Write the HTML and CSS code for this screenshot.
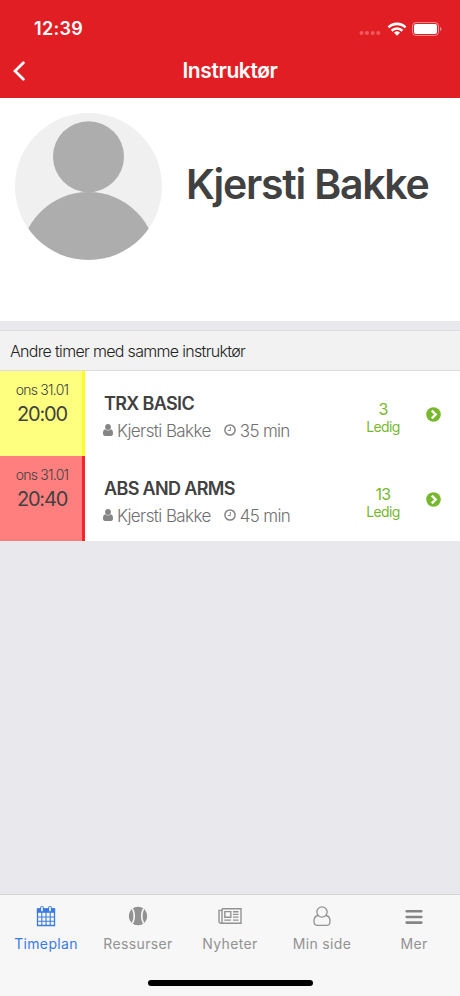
FILE: index.html
```html
<!DOCTYPE html>
<html lang="no">
  <head>
    <meta charset="UTF-8" />
    <meta name="viewport" content="width=device-width, initial-scale=1.0" />
    <title>Instruktør</title>
    <link rel="stylesheet" href="styles.css">
  </head>
  <body>
    <header class="header">
      <div class="status-bar">
        <span class="clock">12:39</span>
        <div class="status-icons">
          <svg class="signal" width="22" height="6" viewBox="0 0 22 6" fill="#ec5a60">
            <circle cx="2.5" cy="3" r="2" />
            <circle cx="8" cy="3" r="2" />
            <circle cx="13.7" cy="3" r="2" />
            <circle cx="19.3" cy="3" r="2" />
          </svg>
          <svg class="wifi" width="20" height="14" viewBox="0 0 20 14" fill="none" stroke="#fff" stroke-width="2.6">
            <path d="M1.4 5.4a12.3 12.3 0 0 1 17.2 0" />
            <path d="M4.6 8.7a7.7 7.7 0 0 1 10.8 0" />
            <path d="M10 13.8l-3-3a4.3 4.3 0 0 1 6 0z" fill="#fff" stroke="none" />
          </svg>
          <svg class="battery" width="30" height="14" viewBox="0 0 30 14">
            <rect x=".5" y=".5" width="26" height="13" rx="3.5" fill="none" stroke="#f08d91" />
            <rect x="2" y="2" width="23" height="10" rx="2" fill="#fff" />
            <path d="M28 4.8c2 .8 2 3.6 0 4.4z" fill="#f08d91" />
          </svg>
        </div>
      </div>
      <div class="nav-bar">
        <svg class="back" width="12" height="20" viewBox="0 0 12 20" fill="none" stroke="#fff" stroke-width="2.7" stroke-linecap="round">
          <path d="M10.400 1.700L2 10l8.400 8.300" />
        </svg>
        <h1 class="title">Instruktør</h1>
      </div>
    </header>

    <main class="content">
      <section class="profile">
        <svg class="avatar" width="148" height="148" viewBox="0 0 148 148">
          <clipPath id="avatar-clip"><circle cx="74.5" cy="73.5" r="73.5" /></clipPath>
          <g clip-path="url(#avatar-clip)">
            <rect width="148" height="148" fill="#f0f0f0" />
            <circle cx="74.5" cy="43.7" r="35.5" fill="#adadad" />
            <circle cx="74.5" cy="147" r="68" fill="#adadad" />
          </g>
        </svg>
        <h2 class="name">Kjersti Bakke</h2>
      </section>

      <h3 class="list-header">Andre timer med samme instruktør</h3>

      <div class="lesson yellow">
        <div class="when">
          <span class="date">ons 31.01</span>
          <span class="time">20:00</span>
        </div>
        <div class="info">
          <h4>TRX BASIC</h4>
          <p>
            <svg class="user" width="10" height="12" viewBox="0 0 10 12" fill="#858585">
              <circle cx="5" cy="3" r="2.9" />
              <path d="M2.300 5.300C.5 5.500 0 7.300 0 9.500 0 11 .7 12 2 12h6c1.300 0 2-1 2-2.500 0-2.200-.5-4-2.300-4.200a4 4 0 0 1-5.400 0z" />
            </svg>
            <span class="who">Kjersti Bakke</span>
            <svg class="clock-icon" width="12" height="12" viewBox="0 0 12 12" fill="none" stroke="#858585">
              <circle cx="6" cy="6" r="5.1" stroke-width="1.5" />
              <path d="M6.300 3v3.500H3.800" />
            </svg>
            <span class="length">35 min</span>
          </p>
        </div>
        <div class="free"><b>3</b><span>Ledig</span></div>
        <svg class="go" width="15" height="15" viewBox="0 0 15 15">
          <circle cx="7.5" cy="7.5" r="7.3" fill="#77b82e" />
          <path d="M5.800 3.600l3.900 3.900-3.900 3.900" fill="none" stroke="#fff" stroke-width="2.4" />
        </svg>
      </div>

      <div class="lesson red">
        <div class="when">
          <span class="date">ons 31.01</span>
          <span class="time">20:40</span>
        </div>
        <div class="info">
          <h4>ABS AND ARMS</h4>
          <p>
            <svg class="user" width="10" height="12" viewBox="0 0 10 12" fill="#858585">
              <circle cx="5" cy="3" r="2.9" />
              <path d="M2.300 5.300C.5 5.500 0 7.300 0 9.500 0 11 .7 12 2 12h6c1.300 0 2-1 2-2.500 0-2.200-.5-4-2.300-4.200a4 4 0 0 1-5.400 0z" />
            </svg>
            <span class="who">Kjersti Bakke</span>
            <svg class="clock-icon" width="12" height="12" viewBox="0 0 12 12" fill="none" stroke="#858585">
              <circle cx="6" cy="6" r="5.1" stroke-width="1.5" />
              <path d="M6.300 3v3.500H3.800" />
            </svg>
            <span class="length">45 min</span>
          </p>
        </div>
        <div class="free"><b>13</b><span>Ledig</span></div>
        <svg class="go" width="15" height="15" viewBox="0 0 15 15">
          <circle cx="7.5" cy="7.5" r="7.3" fill="#77b82e" />
          <path d="M5.800 3.600l3.900 3.900-3.900 3.900" fill="none" stroke="#fff" stroke-width="2.4" />
        </svg>
      </div>
    </main>

    <footer class="footer">
      <nav class="tabs">
        <a class="tab active">
          <svg width="24" height="22" viewBox="0 0 24 22">
            <path d="M3.500 4h17v16.500h-17z" fill="#f7f7f7" stroke="#3b7be4" stroke-width="1.3" />
            <path d="M2.900 3.500h18.200v4.300H2.900z" fill="#3b7be4" />
            <path d="M3.500 12h17M3.500 16.200h17M7.800 7v13.500M12 7v13.500M16.200 7v13.500" stroke="#3b7be4" stroke-width="1.1" />
            <path d="M8 2.800v2.600M16 2.800v2.600" stroke="#3b7be4" stroke-width="3.8" stroke-linecap="round" />
            <path d="M8 2.500v3M16 2.500v3" stroke="#f7f7f7" stroke-width="1.7" stroke-linecap="round" />
          </svg>
          <span>Timeplan</span>
        </a>
        <a class="tab">
          <svg width="24" height="22" viewBox="0 0 24 22">
            <clipPath id="ball"><circle cx="12" cy="11" r="9.4" /></clipPath>
            <g clip-path="url(#ball)">
              <circle cx="12" cy="11" r="9.4" fill="#929292" />
              <path d="M4.500 1c5 6 5 14 0 20M19.500 1c-5 6-5 14 0 20" fill="none" stroke="#f7f7f7" stroke-width="1.6" />
            </g>
          </svg>
          <span>Ressurser</span>
        </a>
        <a class="tab">
          <svg width="24" height="22" viewBox="0 0 24 22" fill="none" stroke="#929292" stroke-width="1.4">
            <path d="M4 3.700h19v14.500H3c-1.200 0-2-.7-2-1.700V5.400h3M4 3.700v13c0 1-.4 1.500-1 1.500" />
            <path d="M6.800 6.600h6v5.600h-6zM15 6.700h5.500M15 9.400h5.500M15 12.100h5.500M6.200 15.100h6.800M15 15.100h5.500" />
          </svg>
          <span>Nyheter</span>
        </a>
        <a class="tab">
          <svg width="24" height="22" viewBox="0 0 24 22" fill="none" stroke="#929292" stroke-width="1.3">
            <circle cx="12" cy="7" r="5.1" />
            <path d="M8.200 10.500C5.200 10.700 4 13 4 16.300 4 18.600 5 20.300 7 20.300h10c2 0 3-1.700 3-4 0-3.300-1.200-5.600-4.200-5.800" />
          </svg>
          <span>Min side</span>
        </a>
        <a class="tab">
          <svg width="24" height="22" viewBox="0 0 24 22" stroke="#858585" stroke-width="2.6" stroke-linecap="round">
            <path d="M4.700 6.200h14.600M4.700 12h14.600M4.700 17.600h14.600" />
          </svg>
          <span>Mer</span>
        </a>
      </nav>
      <div class="home-indicator"></div>
    </footer>
  </body>
</html>
```
FILE: styles.css
```css
* {
  box-sizing: border-box;
}
body {
  margin: 0;
  height: 996px;
  display: flex;
  flex-direction: column;
  font-family: Inter, "Liberation Sans", sans-serif;
  color: #414141;
  background-color: #e9e8ed;
}
h1,
h2,
h3,
h4,
p {
  margin: 0;
}
svg {
  display: block;
  flex: none;
}
.header {
  height: 98px;
  background-color: #e21e25;
  color: white;
}
.status-bar {
  height: 56px;
  padding: 1px 18px 0 34px;
  display: flex;
  align-items: center;
  justify-content: space-between;
}
.clock {
  font-size: 18px;
  font-weight: 600;
  letter-spacing: 0.3px;
}
.status-icons {
  display: flex;
  align-items: center;
}
.signal {
  margin: 9px 6px 0 0;
}
.wifi {
  margin-right: 5px;
}
.nav-bar {
  height: 30px;
  display: flex;
  align-items: center;
  padding: 0 13px;
}
.title {
  flex: 1;
  margin-right: 12px;
  text-align: center;
  font-size: 21px;
  line-height: 30px;
  font-weight: 600;
  letter-spacing: -0.4px;
}
.content {
  flex: 1;
}
.profile {
  height: 223px;
  padding: 15px 14px;
  display: flex;
  background-color: white;
}
.name {
  margin-left: 24px;
  font-size: 41px;
  line-height: 143px;
  font-weight: 600;
  letter-spacing: -1.25px;
  white-space: nowrap;
}
.list-header {
  margin-top: 9px;
  height: 41px;
  padding-left: 10px;
  border-top: 1px solid #dcdcdc;
  border-bottom: 1px solid #dcdcdc;
  background-color: #f2f2f2;
  color: #222;
  font-size: 16px;
  line-height: 41px;
  font-weight: 300;
  letter-spacing: -0.68px;
}
.lesson {
  height: 85px;
  display: flex;
  background-color: white;
}
.when {
  width: 85px;
  padding-top: 10px;
  display: flex;
  flex-direction: column;
  align-items: center;
  border-right: 3px solid;
}
.yellow .when {
  background-color: #ffff7f;
  border-color: #ffff22;
}
.red .when {
  background-color: #ff7f7f;
  border-color: #fb242b;
}
.date {
  margin-left: 2px;
  font-size: 14px;
  line-height: 18px;
  font-weight: 300;
  letter-spacing: -0.75px;
}
.time {
  margin: 2px 0 0 2px;
  font-size: 20px;
  line-height: 26px;
  letter-spacing: -1.2px;
}
.info {
  width: 258px;
  padding: 20px 0 0 18px;
}
.info h4 {
  margin-left: 1px;
  font-size: 18px;
  line-height: 26px;
  font-weight: 600;
  letter-spacing: -0.65px;
}
.info p {
  display: flex;
  align-items: center;
  height: 28px;
  font-size: 17px;
  font-weight: 300;
  color: #707070;
}
.user,
.clock-icon {
  margin-bottom: 2px;
}
.who {
  margin: 0 13px 0 4px;
  letter-spacing: -0.58px;
}
.length {
  margin-left: 4px;
  letter-spacing: -0.7px;
}
.free {
  width: 80px;
  padding-top: 28px;
  display: flex;
  flex-direction: column;
  align-items: center;
  color: #77b82e;
  font-size: 14px;
  line-height: 16px;
  letter-spacing: -0.65px;
}
.free b {
  font-size: 16px;
  line-height: 20px;
  font-weight: 400;
}
.go {
  margin: 36px 0 0 3px;
}
.footer {
  height: 102px;
  border-top: 1px solid #d6d6d8;
  background-color: #f7f7f7;
}
.tabs {
  height: 85px;
  display: flex;
}
.tab {
  flex: 1;
  padding-top: 10px;
  display: flex;
  flex-direction: column;
  align-items: center;
  color: #929292;
  font-size: 14px;
  line-height: 18px;
  letter-spacing: 0.35px;
}
.tab span {
  margin-top: 8px;
}
.active {
  color: #3b7be4;
}
.home-indicator {
  width: 165px;
  height: 6px;
  margin: 0 auto;
  border-radius: 3px;
  background-color: black;
}
```
